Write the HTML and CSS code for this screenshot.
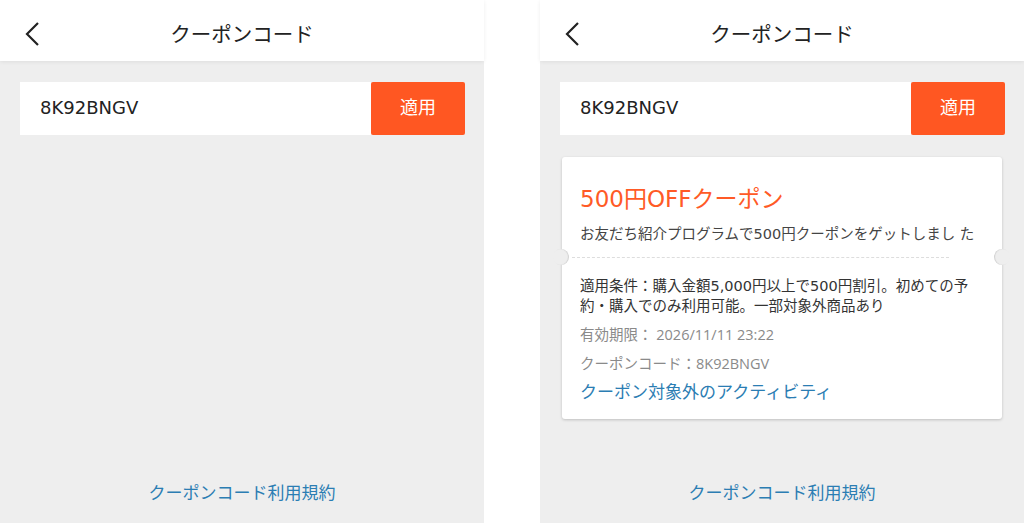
FILE: index.html
```html
<!DOCTYPE html>
<html lang="ja">
<head>
    <meta charset="UTF-8">
    <meta name="viewport" content="width=device-width, initial-scale=1.0">
    <title>クーポンコード</title>
    <link rel="stylesheet" href="styles.css">
</head>
<body>
    <!-- Pantalla 1: código sin aplicar -->
    <div class="pantalla">
        <div class="cabecera">
            <span class="atras">
                <svg width="16" height="24" viewBox="0 0 16 24"><path d="M14 1 L3 12 L14 23" fill="none" stroke="#222" stroke-width="2.2"/></svg>
            </span>
            <h1>クーポンコード</h1>
        </div>
        <div class="contenido">
            <div class="entrada">
                <div class="codigo">8K92BNGV</div>
                <button class="aplicar">適用</button>
            </div>
        </div>
        <a class="terminos">クーポンコード利用規約</a>
    </div>

    <!-- Pantalla 2: cupón aplicado -->
    <div class="pantalla">
        <div class="cabecera">
            <span class="atras">
                <svg width="16" height="24" viewBox="0 0 16 24"><path d="M14 1 L3 12 L14 23" fill="none" stroke="#222" stroke-width="2.2"/></svg>
            </span>
            <h1>クーポンコード</h1>
        </div>
        <div class="contenido">
            <div class="entrada">
                <div class="codigo">8K92BNGV</div>
                <button class="aplicar">適用</button>
            </div>

            <div class="cupon">
                <div class="cupon-arriba">
                    <div class="cupon-titulo">500円OFFクーポン</div>
                    <div class="cupon-sub">お友だち紹介プログラムで500円クーポンをゲットしまし た</div>
                </div>
                <div class="separador">
                    <span class="muesca izq"></span>
                    <span class="muesca der"></span>
                </div>
                <div class="cupon-abajo">
                    <div class="condiciones">適用条件：購入金額5,000円以上で500円割引。初めての予約・購入でのみ利用可能。一部対象外商品あり</div>
                    <div class="dato">有効期限： 2026/11/11 23:22</div>
                    <div class="dato">クーポンコード：8K92BNGV</div>
                    <a class="enlace">クーポン対象外のアクティビティ</a>
                </div>
            </div>
        </div>
        <a class="terminos">クーポンコード利用規約</a>
    </div>
</body>
</html>
```

FILE: styles.css
```css
body {
    margin: 0;
    padding: 0;
    background-color: #ffffff;
    display: flex;
    justify-content: space-between;
    height: 523px;
    overflow: hidden;
    font-family: "DejaVu Sans", "Noto Sans CJK JP", sans-serif;
    color: #333333;
}

.pantalla {
    width: 484px;
    height: 523px;
    background-color: #eeeeee;
    display: flex;
    flex-direction: column;
}

.cabecera {
    position: relative;
    height: 61px;
    background-color: #ffffff;
    box-shadow: 0 1px 4px rgba(0, 0, 0, 0.07);
    display: flex;
    align-items: center;
    justify-content: center;
}

.atras {
    position: absolute;
    left: 24px;
    top: 22px;
    display: flex;
}

h1 {
    margin: 0;
    font-size: 20.5px;
    font-weight: normal;
    color: #222222;
    padding-top: 4px;
}

.contenido {
    padding: 21px 19px 0 20px;
}

.entrada {
    display: flex;
    height: 53px;
}

.codigo {
    flex: 1;
    background-color: #ffffff;
    display: flex;
    align-items: center;
    padding-left: 20px;
    padding-bottom: 3px;
    font-size: 18px;
    color: #222222;
}

.aplicar {
    width: 94px;
    border: none;
    border-radius: 2px;
    background-color: #ff5722;
    color: #ffffff;
    font-family: "Noto Sans CJK JP", sans-serif;
    font-size: 18px;
    padding: 0 0 5px 0;
}

.cupon {
    margin: 22px 3px 0 2px;
    background-color: #ffffff;
    border-radius: 3px;
    box-shadow: 0 1px 3px rgba(0, 0, 0, 0.2);
}

.cupon-arriba {
    padding: 27px 18px 12px 18px;
}

.cupon-titulo {
    font-size: 23px;
    line-height: 30px;
    color: #ff5a26;
}

.cupon-sub {
    margin-top: 9px;
    font-size: 14.5px;
    line-height: 22px;
    white-space: nowrap;
    color: #444444;
}

.separador {
    position: relative;
    height: 0;
    margin: 0 53px 0 10px;
    border-top: 1px dashed #dddddd;
}

.muesca {
    position: absolute;
    top: -9px;
    width: 16px;
    height: 16px;
    border-radius: 50%;
    background-color: #eeeeee;
}

.muesca.izq {
    left: -19px;
    box-shadow: inset -1px 0 1px rgba(0, 0, 0, 0.12);
}

.muesca.der {
    right: -61px;
    box-shadow: inset 1px 0 1px rgba(0, 0, 0, 0.12);
}

.cupon-abajo {
    padding: 18px 18px 15px 18px;
}

.condiciones {
    font-size: 14.5px;
    line-height: 20px;
    color: #333333;
}

.dato {
    margin-top: 9px;
    font-family: "Open Sans", "Noto Sans CJK JP", sans-serif;
    font-size: 14.5px;
    line-height: 20px;
    color: #8a8a8a;
}

.enlace {
    display: block;
    margin-top: 6px;
    font-size: 17px;
    line-height: 24px;
    color: #2b7db3;
}

.terminos {
    margin-top: auto;
    margin-bottom: 18px;
    text-align: center;
    font-size: 17px;
    line-height: 24px;
    color: #2b7db3;
}
```
